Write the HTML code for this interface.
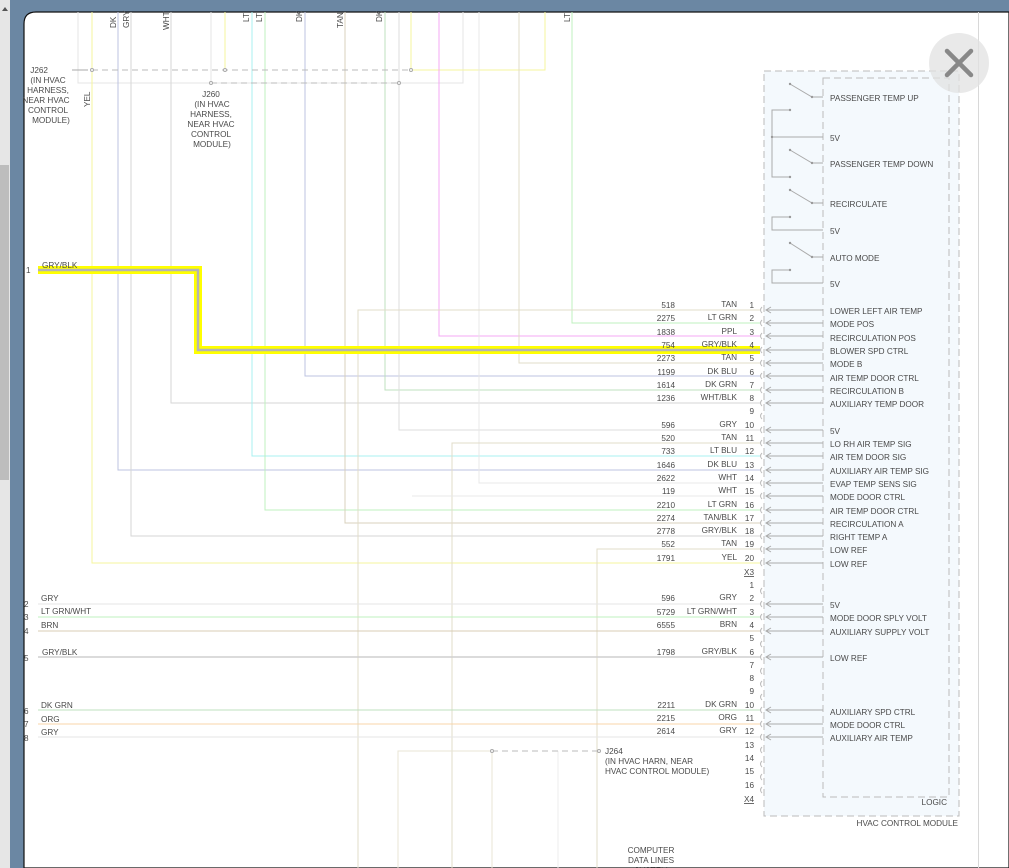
<!DOCTYPE html>
<html><head><meta charset="utf-8"><style>
html,body{margin:0;padding:0;width:1009px;height:868px;overflow:hidden;background:#fff}
svg{display:block}
text{font-family:"Liberation Sans",sans-serif;font-size:8.2px;fill:#4a4a4a}
</style></head><body>
<svg width="1009" height="868" viewBox="0 0 1009 868" xmlns="http://www.w3.org/2000/svg">
<defs><path id="ar" d="M771 -3 L766 0 L771 3" fill="none" stroke="#aaa"/></defs>
<rect x="0" y="0" width="1009" height="868" fill="#6b87a3"/>
<rect x="0" y="0" width="10" height="868" fill="#e6e6e6"/>
<rect x="0" y="165" width="9" height="315" fill="#bdbdbd"/>
<path d="M2 11 L5 7 L8 11Z" fill="#555"/>
<path d="M24 868 V24 Q24 12 36 12 H1009 V868Z" fill="#fff" stroke="#111" stroke-width="1.2"/>
<line x1="978.5" y1="12" x2="978.5" y2="868" stroke="#d8d8d8"/>

<g fill="none" stroke-width="1">
<path d="M78 12 V83 H463 V12" stroke="#e4e4e4"/>
<path d="M92 12 V563 H760" stroke="#f6f69c"/>
<path d="M118 12 V470 H760" stroke="#bcc3e0"/>
<path d="M131 12 V536 H760" stroke="#d6d6d6"/>
<path d="M171 12 V403 H760" stroke="#d6d6d6"/>
<path d="M211 12 V83" stroke="#e4e4e4"/>
<path d="M225 12 V70" stroke="#f6f69c"/>
<path d="M252 12 V456 H760" stroke="#a8f0f0"/>
<path d="M265 12 V510 H760" stroke="#bff0bf"/>
<path d="M305 12 V376 H760" stroke="#bcc3e0"/>
<path d="M345 12 V523 H760" stroke="#d8d0bc"/>
<path d="M385 12 V390 H760" stroke="#bfe0bf"/>
<path d="M399 12 V430 H760" stroke="#dedede"/>
<path d="M411 12 V70 H545 V12" stroke="#f6f69c"/>
<path d="M439 12 V336 H760" stroke="#f4a8f4"/>
<path d="M479 12 V483 H760" stroke="#e8e8e8"/>
<path d="M519 12 V363 H760" stroke="#e2dcc8"/>
<path d="M572 12 V323 H760" stroke="#bff0bf"/>
<path d="M358 868 V310 H760" stroke="#e2dcc8"/>
<path d="M452 868 V443 H760" stroke="#e2dcc8"/>
<path d="M412 496 H760" stroke="#e8e8e8"/>
<path d="M597 868 V549 H760" stroke="#e2dcc8"/>
<path d="M398 868 V751 H492 V868" stroke="#e8e4d6"/>
<path d="M558 751 V868" stroke="#eeeeee"/>
<path d="M38 604 H760" stroke="#e6e6e6"/>
<path d="M38 617 H760" stroke="#bff0bf"/>
<path d="M38 631 H760" stroke="#d8ccb4"/>
<path d="M38 657 H760" stroke="#cfcfcf" stroke-width="1.5"/>
<path d="M38 710 H760" stroke="#bfe0bf"/>
<path d="M38 724 H760" stroke="#f8d4a8"/>
<path d="M38 737 H760" stroke="#e6e6e6"/>
</g>
<g stroke="#bbb" stroke-dasharray="6,4" fill="none">
<path d="M92 70 H411"/><path d="M211 83 H399"/><path d="M492 751 H599"/>
</g>
<path d="M72 70 H88" stroke="#aaa"/>
<g fill="#fff" stroke="#aaa"><circle cx="92" cy="70" r="1.5"/><circle cx="225" cy="70" r="1.5"/><circle cx="411" cy="70" r="1.5"/><circle cx="211" cy="83" r="1.5"/><circle cx="399" cy="83" r="1.5"/><circle cx="492" cy="751" r="1.5"/><circle cx="599" cy="751" r="1.5"/></g>

<path d="M38 270 H198 V350 H760" fill="none" stroke="#ffff00" stroke-width="8"/>
<path d="M38 270 H198 V350 H760" fill="none" stroke="#b4b4b4" stroke-width="2.5"/>

<rect x="764" y="71" width="195" height="745" fill="#f4f9fd" stroke="#bbb" stroke-dasharray="7,4"/>
<rect x="823" y="78" width="126" height="719" fill="none" stroke="#bbb" stroke-dasharray="7,4"/>
<g stroke="#aaa" fill="none">
<path d="M790 84 L812 97 H823"/><path d="M790 150 L812 163 H823"/><path d="M790 190 L812 203 H823"/><path d="M790 243 L812 257 H823"/>
<path d="M790 110 H772 V177 H790 M772 137 H823"/>
<path d="M790 217 H772 V230 H823"/>
<path d="M790 270 H772 V283 H823"/>
</g>
<g fill="#999"><circle cx="790" cy="84" r="1.2"/><circle cx="812" cy="97" r="1.2"/><circle cx="790" cy="150" r="1.2"/><circle cx="812" cy="163" r="1.2"/><circle cx="790" cy="190" r="1.2"/><circle cx="812" cy="203" r="1.2"/><circle cx="790" cy="243" r="1.2"/><circle cx="812" cy="257" r="1.2"/><circle cx="790" cy="110" r="1.2"/><circle cx="790" cy="177" r="1.2"/><circle cx="772" cy="137" r="1.2"/><circle cx="790" cy="217" r="1.2"/><circle cx="790" cy="270" r="1.2"/></g>
<g stroke="#aaa" fill="none">
<path d="M766 310H823M766 323H823M766 336H823M766 350H823M766 363H823M766 376H823M766 390H823M766 403H823M766 430H823M766 443H823M766 456H823M766 470H823M766 483H823M766 496H823M766 510H823M766 523H823M766 536H823M766 549H823M766 563H823M766 604H823M766 617H823M766 631H823M766 657H823M766 710H823M766 724H823M766 737H823"/>
</g>
<g>
<use href="#ar" y="310"/><use href="#ar" y="323"/><use href="#ar" y="336"/><use href="#ar" y="350"/><use href="#ar" y="363"/><use href="#ar" y="376"/><use href="#ar" y="390"/><use href="#ar" y="403"/><use href="#ar" y="430"/><use href="#ar" y="443"/><use href="#ar" y="456"/><use href="#ar" y="470"/><use href="#ar" y="483"/><use href="#ar" y="496"/><use href="#ar" y="510"/><use href="#ar" y="523"/><use href="#ar" y="536"/><use href="#ar" y="549"/><use href="#ar" y="563"/><use href="#ar" y="604"/><use href="#ar" y="617"/><use href="#ar" y="631"/><use href="#ar" y="657"/><use href="#ar" y="710"/><use href="#ar" y="724"/><use href="#ar" y="737"/>
</g>
<g stroke="#bbb" fill="none">
<path d="M762 307q-3 3 0 6M762 320q-3 3 0 6M762 333q-3 3 0 6M762 347q-3 3 0 6M762 360q-3 3 0 6M762 373q-3 3 0 6M762 387q-3 3 0 6M762 400q-3 3 0 6M762 413q-3 3 0 6M762 427q-3 3 0 6M762 440q-3 3 0 6M762 453q-3 3 0 6M762 467q-3 3 0 6M762 480q-3 3 0 6M762 493q-3 3 0 6M762 507q-3 3 0 6M762 520q-3 3 0 6M762 533q-3 3 0 6M762 546q-3 3 0 6M762 560q-3 3 0 6"/>
<path d="M762 588q-3 3 0 6M762 601q-3 3 0 6M762 614q-3 3 0 6M762 628q-3 3 0 6M762 641q-3 3 0 6M762 654q-3 3 0 6M762 668q-3 3 0 6M762 681q-3 3 0 6M762 694q-3 3 0 6M762 707q-3 3 0 6M762 721q-3 3 0 6M762 734q-3 3 0 6M762 747q-3 3 0 6M762 761q-3 3 0 6M762 774q-3 3 0 6M762 787q-3 3 0 6"/>
</g>

<g>
<text transform="translate(116,28) rotate(-90)">DK</text>
<text transform="translate(129,28) rotate(-90)">GRY</text>
<text transform="translate(169,30) rotate(-90)">WHT</text>
<text transform="translate(249,22) rotate(-90)">LT</text>
<text transform="translate(262,22) rotate(-90)">LT</text>
<text transform="translate(302,22) rotate(-90)">DK</text>
<text transform="translate(343,28) rotate(-90)">TAN</text>
<text transform="translate(382,22) rotate(-90)">DK</text>
<text transform="translate(570,22) rotate(-90)">LT</text>
<text transform="translate(90,107) rotate(-90)">YEL</text>
</g>
<g text-anchor="middle">
<text x="48" y="73" text-anchor="end">J262</text>
<text x="48" y="83">(IN HVAC</text><text x="48" y="93">HARNESS,</text><text x="46" y="103">NEAR HVAC</text><text x="48" y="113">CONTROL</text><text x="51" y="123">MODULE)</text>
<text x="211" y="97">J260</text><text x="212" y="107">(IN HVAC</text><text x="211" y="117">HARNESS,</text><text x="211" y="127">NEAR HVAC</text><text x="211" y="137">CONTROL</text><text x="212" y="147">MODULE)</text>
</g>
<text x="26" y="273">1</text><text x="42" y="268">GRY/BLK</text>

<g text-anchor="end">
<text x="675" y="308">518</text><text x="675" y="321">2275</text><text x="675" y="335">1838</text><text x="675" y="348">754</text><text x="675" y="361">2273</text><text x="675" y="375">1199</text><text x="675" y="388">1614</text><text x="675" y="401">1236</text>
<text x="675" y="428">596</text><text x="675" y="441">520</text><text x="675" y="454">733</text><text x="675" y="468">1646</text><text x="675" y="481">2622</text><text x="675" y="494">119</text><text x="675" y="508">2210</text><text x="675" y="521">2274</text><text x="675" y="534">2778</text><text x="675" y="547">552</text><text x="675" y="561">1791</text>
<text x="737" y="307">TAN</text><text x="737" y="320">LT GRN</text><text x="737" y="334">PPL</text><text x="737" y="347">GRY/BLK</text><text x="737" y="360">TAN</text><text x="737" y="374">DK BLU</text><text x="737" y="387">DK GRN</text><text x="737" y="400">WHT/BLK</text>
<text x="737" y="427">GRY</text><text x="737" y="440">TAN</text><text x="737" y="453">LT BLU</text><text x="737" y="467">DK BLU</text><text x="737" y="480">WHT</text><text x="737" y="493">WHT</text><text x="737" y="507">LT GRN</text><text x="737" y="520">TAN/BLK</text><text x="737" y="533">GRY/BLK</text><text x="737" y="546">TAN</text><text x="737" y="560">YEL</text>
<text x="754" y="308">1</text><text x="754" y="321">2</text><text x="754" y="335">3</text><text x="754" y="348">4</text><text x="754" y="361">5</text><text x="754" y="375">6</text><text x="754" y="388">7</text><text x="754" y="401">8</text><text x="754" y="414">9</text><text x="754" y="428">10</text><text x="754" y="441">11</text><text x="754" y="454">12</text><text x="754" y="468">13</text><text x="754" y="481">14</text><text x="754" y="494">15</text><text x="754" y="508">16</text><text x="754" y="521">17</text><text x="754" y="534">18</text><text x="754" y="547">19</text><text x="754" y="561">20</text>
<text x="754" y="588">1</text><text x="754" y="601">2</text><text x="754" y="615">3</text><text x="754" y="628">4</text><text x="754" y="641">5</text><text x="754" y="655">6</text><text x="754" y="668">7</text><text x="754" y="681">8</text><text x="754" y="694">9</text><text x="754" y="708">10</text><text x="754" y="721">11</text><text x="754" y="734">12</text><text x="754" y="748">13</text><text x="754" y="761">14</text><text x="754" y="774">15</text><text x="754" y="788">16</text>
<text x="675" y="601">596</text><text x="675" y="615">5729</text><text x="675" y="628">6555</text><text x="675" y="655">1798</text><text x="675" y="708">2211</text><text x="675" y="721">2215</text><text x="675" y="734">2614</text>
<text x="737" y="600">GRY</text><text x="737" y="614">LT GRN/WHT</text><text x="737" y="627">BRN</text><text x="737" y="654">GRY/BLK</text><text x="737" y="707">DK GRN</text><text x="737" y="720">ORG</text><text x="737" y="733">GRY</text>
</g>
<text x="744" y="575" text-decoration="underline">X3</text>
<text x="744" y="802" text-decoration="underline">X4</text>
<text x="24" y="607">2</text><text x="24" y="620">3</text><text x="24" y="634">4</text><text x="24" y="661">5</text><text x="24" y="714">6</text><text x="24" y="727">7</text><text x="24" y="741">8</text>
<text x="41" y="601">GRY</text><text x="41" y="614">LT GRN/WHT</text><text x="41" y="628">BRN</text><text x="42" y="655">GRY/BLK</text><text x="41" y="708">DK GRN</text><text x="41" y="722">ORG</text><text x="41" y="735">GRY</text>
<text x="605" y="754">J264</text><text x="605" y="764">(IN HVAC HARN, NEAR</text><text x="605" y="774">HVAC CONTROL MODULE)</text>
<g text-anchor="middle"><text x="651" y="853">COMPUTER</text><text x="651" y="863">DATA LINES</text><text x="651" y="873">SYSTEM</text></g>

<g>
<text x="830" y="101">PASSENGER TEMP UP</text><text x="830" y="141">5V</text><text x="830" y="167">PASSENGER TEMP DOWN</text><text x="830" y="207">RECIRCULATE</text><text x="830" y="234">5V</text><text x="830" y="261">AUTO MODE</text><text x="830" y="287">5V</text>
<text x="830" y="314">LOWER LEFT AIR TEMP</text><text x="830" y="327">MODE POS</text><text x="830" y="341">RECIRCULATION POS</text><text x="830" y="354">BLOWER SPD CTRL</text><text x="830" y="367">MODE B</text><text x="830" y="381">AIR TEMP DOOR CTRL</text><text x="830" y="394">RECIRCULATION B</text><text x="830" y="407">AUXILIARY TEMP DOOR</text>
<text x="830" y="434">5V</text><text x="830" y="447">LO RH AIR TEMP SIG</text><text x="830" y="460">AIR TEM DOOR SIG</text><text x="830" y="474">AUXILIARY AIR TEMP SIG</text><text x="830" y="487">EVAP TEMP SENS SIG</text><text x="830" y="500">MODE DOOR CTRL</text><text x="830" y="514">AIR TEMP DOOR CTRL</text><text x="830" y="527">RECIRCULATION A</text><text x="830" y="540">RIGHT TEMP A</text><text x="830" y="553">LOW REF</text><text x="830" y="567">LOW REF</text>
<text x="830" y="608">5V</text><text x="830" y="621">MODE DOOR SPLY VOLT</text><text x="830" y="635">AUXILIARY SUPPLY VOLT</text><text x="830" y="661">LOW REF</text><text x="830" y="715">AUXILIARY SPD CTRL</text><text x="830" y="728">MODE DOOR CTRL</text><text x="830" y="741">AUXILIARY AIR TEMP</text>
<text x="947" y="805" text-anchor="end">LOGIC</text>
<text x="958" y="826" text-anchor="end">HVAC CONTROL MODULE</text>
</g>

<circle cx="959" cy="63" r="30" fill="#e2e2e2" fill-opacity="0.75"/>
<path d="M947 51 L971 75 M971 51 L947 75" stroke="#888" stroke-width="4.5" stroke-linecap="round"/>
</svg>
</body></html>
